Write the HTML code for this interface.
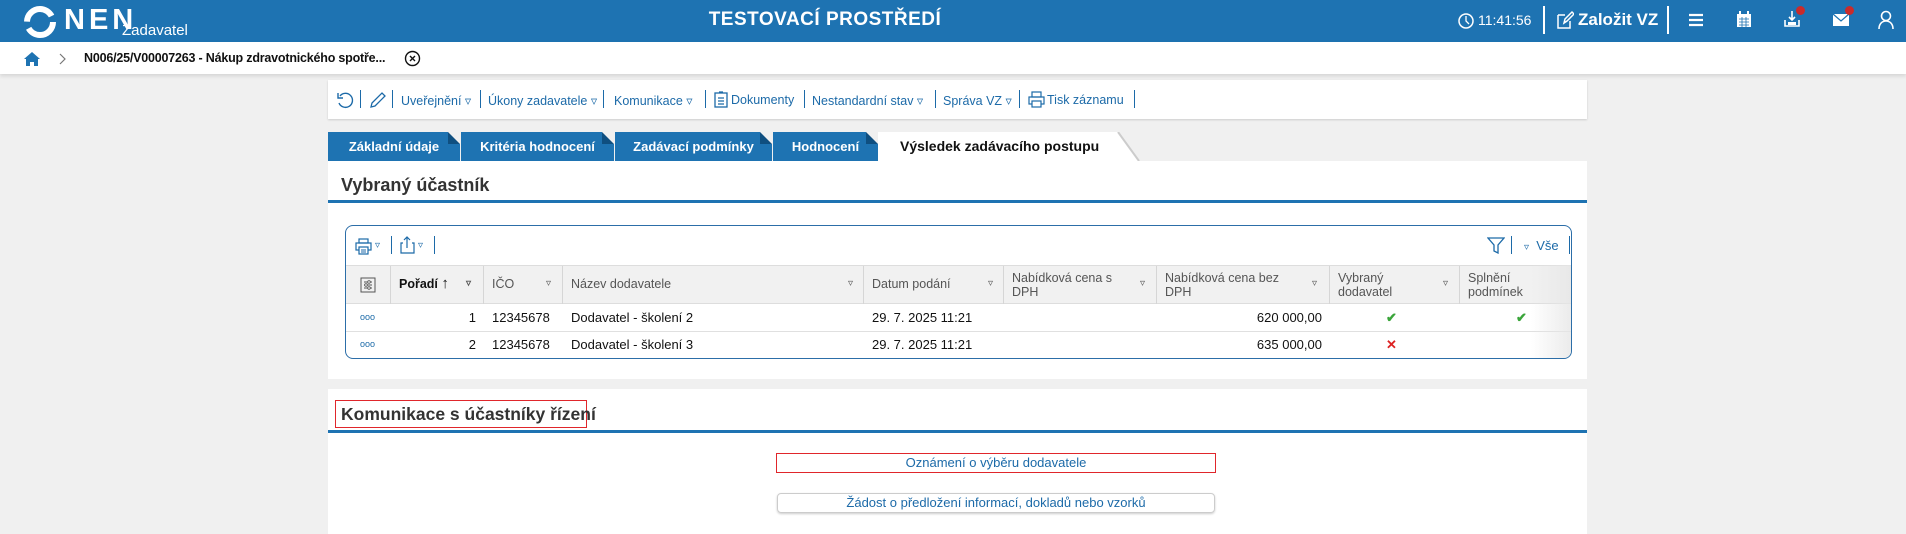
<!DOCTYPE html>
<html><head><meta charset="utf-8">
<style>
*{box-sizing:border-box;margin:0;padding:0}
body{width:1906px;height:534px;overflow:hidden;background:#f0f0f0;font-family:"Liberation Sans",sans-serif;position:relative;color:#222}
.abs{position:absolute}
.hdr{left:0;top:0;width:1906px;height:42px;background:#1e73b2}
.bc{left:0;top:42px;width:1906px;height:32px;background:#fff;box-shadow:0 2px 4px rgba(0,0,0,.12)}
.w{color:#fff}
.card{background:#fff}
.tb{left:328px;top:80px;width:1259px;height:39px;box-shadow:0 1px 2px rgba(0,0,0,.15)}
.tbi{position:absolute;top:13px;font-size:12.5px;color:#1c6aa8;white-space:nowrap}
.sep{position:absolute;top:10px;width:1px;height:18px;background:#1c6aa8}
.tab{position:absolute;top:132px;height:29px;background:#1e73b2;color:#fff;font-weight:bold;font-size:13px;line-height:29px;text-align:center}
.tab:after{content:"";position:absolute;right:0;top:0;border-style:solid;border-width:0 12px 12px 0;border-color:transparent #f0f0f0 #0f4f80 transparent}
.th{position:absolute;top:0;height:38px;border-right:1px solid #d6d6d6;font-size:12.5px;color:#555;padding:5px 26px 5px 8px;line-height:14px}
.td{position:absolute;font-size:13px;color:#111;line-height:27px}
.tri{position:absolute;font-size:10px;color:#555}
</style></head><body>
<div class="abs hdr"></div>
<svg class="abs" style="left:22px;top:4px" width="36" height="36" viewBox="0 0 36 36"><circle cx="18" cy="18" r="13" fill="none" stroke="#fff" stroke-width="6" stroke-dasharray="34 7 34 7"/></svg>
<div class="abs w" style="left:64px;top:4px;font-size:29px;font-weight:bold;letter-spacing:4px">NEN</div>
<div class="abs w" style="left:122px;top:22px;font-size:15px">Zadavatel</div>
<div class="abs w" style="left:0;width:1650px;text-align:center;top:9px;font-size:19px;font-weight:bold;letter-spacing:.5px">TESTOVACÍ PROSTŘEDÍ</div>
<svg class="abs" style="left:1458px;top:12px" width="16" height="18"><circle cx="8" cy="9" r="7" fill="none" stroke="#fff" stroke-width="1.5"/><path d="M8 4v5l3 3" stroke="#fff" fill="none" stroke-width="1.3"/></svg>
<div class="abs w" style="left:1478px;top:12px;font-size:14px">11:41:56</div>
<div class="abs" style="left:1543px;top:6px;width:2px;height:28px;background:#fff"></div>
<svg class="abs" style="left:1556px;top:10px" width="18" height="20"><path d="M2 5h7M2 5v13h12v-7M8 13l1-4 7-7 2 2-7 7z" stroke="#fff" fill="none" stroke-width="1.5"/></svg>
<div class="abs w" style="left:1578px;top:10px;font-size:17px;font-weight:bold">Založit VZ</div>
<div class="abs" style="left:1667px;top:6px;width:2px;height:28px;background:#fff"></div>
<svg class="abs" style="left:1688px;top:12px" width="16" height="16"><path d="M1 3h14M1 8h14M1 13h14" stroke="#fff" stroke-width="2.2"/></svg>
<svg class="abs" style="left:1736px;top:10px" width="16" height="18"><rect x="1" y="4" width="14" height="13" fill="#fff"/><path d="M4 1v4M12 1v4" stroke="#fff" stroke-width="2"/><path d="M3 9h10M3 12h10M3 15h10M6 7v10M10 7v10" stroke="#1e73b2" stroke-width=".8"/></svg>
<svg class="abs" style="left:1783px;top:10px" width="18" height="18"><path d="M9 1v9M6 7l3 3 3-3M2 10v6h14v-6" stroke="#fff" fill="none" stroke-width="1.6"/><rect x="5" y="12" width="8" height="3" fill="#fff"/></svg>
<div class="abs" style="left:1796px;top:6px;width:9px;height:9px;border-radius:50%;background:#c92b2b"></div>
<svg class="abs" style="left:1832px;top:13px" width="18" height="14"><rect x="1" y="1" width="16" height="12" fill="#fff"/><path d="M1 1l8 7 8-7" stroke="#1e73b2" fill="none" stroke-width="1.2"/></svg>
<div class="abs" style="left:1845px;top:6px;width:9px;height:9px;border-radius:50%;background:#c92b2b"></div>
<svg class="abs" style="left:1878px;top:10px" width="16" height="20"><circle cx="8" cy="6" r="4.5" fill="none" stroke="#fff" stroke-width="1.6"/><path d="M1 19c0-5 3-8 7-8s7 3 7 8" stroke="#fff" fill="none" stroke-width="1.6"/></svg>

<div class="abs bc"></div>
<svg class="abs" style="left:23px;top:51px" width="18" height="15"><path d="M9 1L1 8h2v7h4v-4h4v4h4V8h2z" fill="#1e73b2"/></svg>
<svg class="abs" style="left:59px;top:53px" width="8" height="12"><path d="M1 1l5 5-5 5" stroke="#777" fill="none" stroke-width="1.2"/></svg>
<div class="abs" style="left:84px;top:51px;font-size:12.5px;font-weight:bold;color:#111;letter-spacing:-.2px">N006/25/V00007263 - Nákup zdravotnického spotře...</div>
<svg class="abs" style="left:404px;top:50px" width="17" height="17"><circle cx="8.5" cy="8.5" r="7" fill="none" stroke="#111" stroke-width="1.4"/><path d="M6 6l5 5M11 6l-5 5" stroke="#111" stroke-width="1.4"/></svg>

<div class="abs card tb">
<svg style="position:absolute;left:8px;top:11px" width="18" height="18"><path d="M4 5a7 7 0 1 1-1 7" stroke="#1c6aa8" fill="none" stroke-width="1.4"/><path d="M2 2v5h5" stroke="#1c6aa8" fill="none" stroke-width="1.4"/></svg>
<div class="sep" style="left:32px"></div>
<svg style="position:absolute;left:41px;top:11px" width="18" height="18"><path d="M2 16l1-4 10-10 3 3-10 10z" stroke="#1c6aa8" fill="none" stroke-width="1.3"/></svg>
<div class="sep" style="left:64px"></div>
<div class="tbi" style="left:73px">Uveřejnění ▿</div><div class="sep" style="left:152px"></div>
<div class="tbi" style="left:160px">Úkony zadavatele ▿</div><div class="sep" style="left:275px"></div>
<div class="tbi" style="left:286px">Komunikace ▿</div><div class="sep" style="left:377px"></div>
<svg style="position:absolute;left:386px;top:11px" width="14" height="17"><rect x="1" y="2" width="12" height="14" fill="none" stroke="#1c6aa8" stroke-width="1.3"/><path d="M4 7h6M4 10h6M4 13h6M5 1h4" stroke="#1c6aa8" stroke-width="1.2"/></svg>
<div class="tbi" style="left:403px">Dokumenty</div><div class="sep" style="left:476px"></div>
<div class="tbi" style="left:484px">Nestandardní stav ▿</div><div class="sep" style="left:607px"></div>
<div class="tbi" style="left:615px">Správa VZ ▿</div><div class="sep" style="left:691px"></div>
<svg style="position:absolute;left:700px;top:11px" width="17" height="17"><rect x="4" y="1" width="9" height="5" fill="none" stroke="#1c6aa8" stroke-width="1.2"/><rect x="1" y="6" width="15" height="7" fill="none" stroke="#1c6aa8" stroke-width="1.2"/><rect x="4" y="10" width="9" height="6" fill="#fff" stroke="#1c6aa8" stroke-width="1.2"/></svg>
<div class="tbi" style="left:719px">Tisk záznamu</div><div class="sep" style="left:806px"></div>
</div>

<div class="tab" style="left:328px;width:132px">Základní údaje</div>
<div class="tab" style="left:461px;width:153px">Kritéria hodnocení</div>
<div class="tab" style="left:615px;width:157px">Zadávací podmínky</div>
<div class="tab" style="left:773px;width:105px">Hodnocení</div>
<div class="abs" style="left:878px;top:132px;width:240px;height:29px;background:#fff;font-weight:bold;font-size:14px;line-height:29px;padding-left:22px;color:#111">Výsledek zadávacího postupu</div>
<svg class="abs" style="left:1110px;top:132px" width="30" height="29"><path d="M0 0h8l21 29H0z" fill="#fff"/><path d="M8 0l21 29" stroke="#ccc" stroke-width="2"/></svg>

<div class="abs card" style="left:328px;top:161px;width:1259px;height:218px"></div>
<div class="abs" style="left:341px;top:175px;font-size:18px;font-weight:bold;color:#333">Vybraný účastník</div>
<div class="abs" style="left:328px;top:200px;width:1259px;height:3px;background:#1e73b2"></div>

<div class="abs" style="left:345px;top:225px;width:1227px;height:134px;border:1.5px solid #2c6ea8;border-radius:8px;overflow:hidden;background:#fff">
<svg style="position:absolute;left:9px;top:12px" width="18" height="17"><rect x="4" y="1" width="9" height="4" fill="none" stroke="#1c6aa8" stroke-width="1.2"/><rect x="1" y="5" width="15" height="7" fill="none" stroke="#1c6aa8" stroke-width="1.2"/><rect x="4" y="9" width="9" height="7" fill="#fff" stroke="#1c6aa8" stroke-width="1.2"/><path d="M6 12h5M6 14h5" stroke="#1c6aa8"/></svg>
<div class="tri" style="left:29px;top:14px;color:#1c6aa8">▿</div>
<div style="position:absolute;left:45px;top:10px;width:1px;height:18px;background:#1c6aa8"></div>
<svg style="position:absolute;left:54px;top:9px" width="16" height="19"><path d="M3 8H1v10h13V8h-2M7 13V2M4 5l3-3 3 3" stroke="#1c6aa8" fill="none" stroke-width="1.2"/></svg>
<div class="tri" style="left:72px;top:14px;color:#1c6aa8">▿</div>
<div style="position:absolute;left:88px;top:10px;width:1px;height:18px;background:#1c6aa8"></div>
<svg style="position:absolute;left:1141px;top:10px" width="18" height="18"><path d="M1 2h16l-6 7v8l-4-2V9z" stroke="#1c6aa8" fill="none" stroke-width="1.3"/></svg>
<div style="position:absolute;left:1165px;top:10px;width:1px;height:18px;background:#1c6aa8"></div>
<div style="position:absolute;left:1178px;top:12px;font-size:13px;color:#1c6aa8"><span style="font-size:10px">▿</span>&nbsp; Vše</div>
<div style="position:absolute;left:1223px;top:10px;width:1px;height:18px;background:#1c6aa8"></div>

<div style="position:absolute;left:0;top:39px;width:1227px;height:39px;background:#f1f1f1;border-top:1px solid #ddd;border-bottom:1px solid #ddd">
<div class="th" style="left:0;width:45px;padding:0"><svg width="16" height="16" style="margin:11px 0 0 14px"><rect x="1" y="1" width="14" height="14" fill="none" stroke="#555"/><path d="M4 5h8M4 8h8M4 11h8" stroke="#555"/><circle cx="9" cy="5" r="1.3" fill="#fff" stroke="#555" stroke-width=".8"/><circle cx="6" cy="8" r="1.3" fill="#fff" stroke="#555" stroke-width=".8"/><circle cx="9" cy="11" r="1.3" fill="#fff" stroke="#555" stroke-width=".8"/></svg></div>
<div class="th" style="left:45px;width:93px;padding-top:11px;color:#111;font-weight:bold">Pořadí <span style="font-weight:normal;font-size:15px">↑</span><span class="tri" style="left:75px;top:11px">▿</span></div>
<div class="th" style="left:138px;width:79px;padding-top:11px">IČO<span class="tri" style="left:62px;top:11px">▿</span></div>
<div class="th" style="left:217px;width:301px;padding-top:11px">Název dodavatele<span class="tri" style="left:285px;top:11px">▿</span></div>
<div class="th" style="left:518px;width:140px;padding-top:11px">Datum podání<span class="tri" style="left:124px;top:11px">▿</span></div>
<div class="th" style="left:658px;width:153px">Nabídková cena s DPH<span class="tri" style="left:136px;top:11px">▿</span></div>
<div class="th" style="left:811px;width:173px">Nabídková cena bez DPH<span class="tri" style="left:155px;top:11px">▿</span></div>
<div class="th" style="left:984px;width:130px">Vybraný dodavatel<span class="tri" style="left:113px;top:11px">▿</span></div>
<div class="th" style="left:1114px;width:113px;border-right:none">Splnění podmínek</div>
</div>
<div style="position:absolute;left:0;top:105px;width:1227px;height:1px;background:#e0e0e0"></div>
<div class="td" style="left:14px;top:78px;color:#1c6aa8;font-size:9px">ooo</div>
<div class="td" style="left:45px;top:78px;width:85px;text-align:right">1</div>
<div class="td" style="left:146px;top:78px">12345678</div>
<div class="td" style="left:225px;top:78px">Dodavatel - školení 2</div>
<div class="td" style="left:526px;top:78px">29. 7. 2025 11:21</div>
<div class="td" style="left:811px;top:78px;width:165px;text-align:right">620 000,00</div>
<div class="td" style="left:1040px;top:78px;color:#3aa53a;font-weight:bold">✔</div>
<div class="td" style="left:1170px;top:78px;color:#3aa53a;font-weight:bold">✔</div>
<div class="td" style="left:14px;top:105px;color:#1c6aa8;font-size:9px">ooo</div>
<div class="td" style="left:45px;top:105px;width:85px;text-align:right">2</div>
<div class="td" style="left:146px;top:105px">12345678</div>
<div class="td" style="left:225px;top:105px">Dodavatel - školení 3</div>
<div class="td" style="left:526px;top:105px">29. 7. 2025 11:21</div>
<div class="td" style="left:811px;top:105px;width:165px;text-align:right">635 000,00</div>
<div class="td" style="left:1040px;top:105px;color:#d22;font-weight:bold">✕</div>
<div style="position:absolute;right:0;top:39px;width:40px;height:95px;background:linear-gradient(90deg,rgba(255,255,255,0),rgba(230,230,230,.8))"></div>
</div>

<div class="abs card" style="left:328px;top:389px;width:1259px;height:145px"></div>
<div class="abs" style="left:335px;top:400px;width:252px;height:28px;border:1.5px solid #e0262b"></div>
<div class="abs" style="left:341px;top:404px;font-size:17.5px;font-weight:bold;color:#333">Komunikace s účastníky řízení</div>
<div class="abs" style="left:328px;top:430px;width:1259px;height:3px;background:#1e73b2"></div>
<div class="abs" style="left:776px;top:453px;width:440px;height:20px;border:1.5px solid #e0262b;font-size:13px;color:#1c6aa8;text-align:center;line-height:17px">Oznámení o výběru dodavatele</div>
<div class="abs" style="left:777px;top:493px;width:438px;height:20px;border:1px solid #ccc;border-radius:4px;box-shadow:0 1px 2px rgba(0,0,0,.2);font-size:13px;color:#1c6aa8;text-align:center;line-height:18px">Žádost o předložení informací, dokladů nebo vzorků</div>
</body></html>
